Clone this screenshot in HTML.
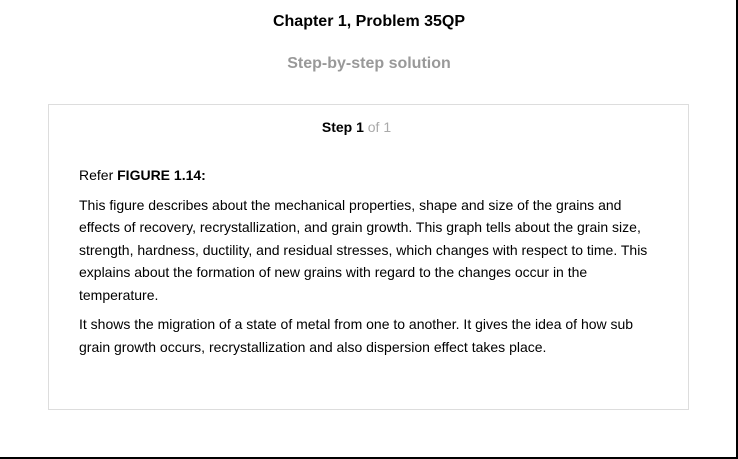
<!DOCTYPE html>
<html><head><style>
html,body{margin:0;padding:0;background:#fff;}
body{width:738px;height:459px;position:relative;overflow:hidden;font-family:"Liberation Sans",Arial,sans-serif;color:#000;}
.frame{position:absolute;left:0;top:0;width:736px;height:457px;border-right:2px solid #000;border-bottom:2px solid #000;}
h1{position:absolute;left:0;width:738px;top:13px;margin:0;text-align:center;font-size:16px;font-weight:bold;}
h2{position:absolute;left:0;width:738px;top:55px;margin:0;text-align:center;font-size:16px;font-weight:bold;color:#999;}
.box{position:absolute;left:48px;top:104px;width:639px;height:304px;border:1px solid #ddd;}
.step{position:absolute;top:14px;left:-12px;width:639px;text-align:center;font-size:14px;}
.step span{color:#aaa;}
.c{position:absolute;left:30px;top:59px;width:570px;font-size:14px;line-height:22.5px;}
.c p{margin:0 0 7px 0;}
</style></head><body>
<div class="frame"></div>
<h1>Chapter 1, Problem 35QP</h1>
<h2>Step-by-step solution</h2>
<div class="box">
<div class="step"><b>Step 1</b> <span>of 1</span></div>
<div class="c">
<p>Refer <b>FIGURE 1.14:</b></p>
<p>This figure describes about the mechanical properties, shape and size of the grains and effects of recovery, recrystallization, and grain growth. This graph tells about the grain size, strength, hardness, ductility, and residual stresses, which changes with respect to time. This explains about the formation of new grains with regard to the changes occur in the temperature.</p>
<p>It shows the migration of a state of metal from one to another. It gives the idea of how sub grain growth occurs, recrystallization and also dispersion effect takes place.</p>
</div>
</div>
</body></html>
